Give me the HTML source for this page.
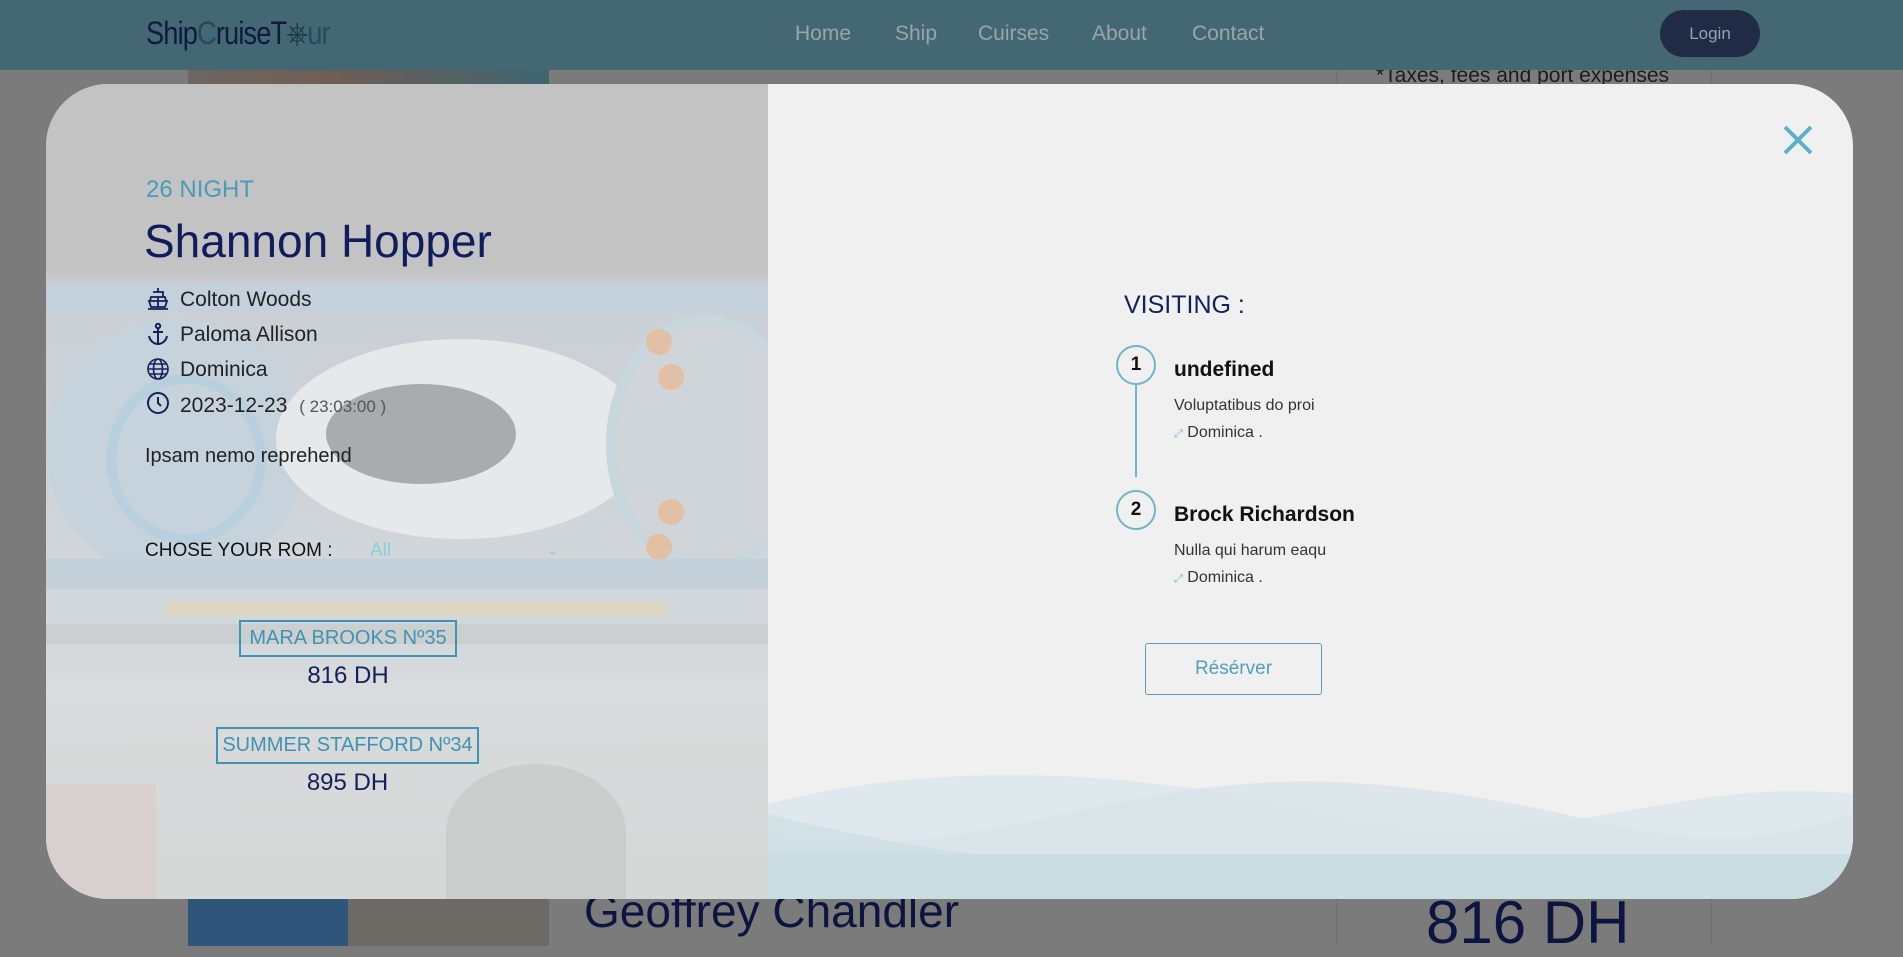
<!DOCTYPE html>
<html><head><meta charset="utf-8"><style>
*{box-sizing:border-box;margin:0;padding:0}
body{width:1903px;height:946px;overflow:hidden;background:#7b7b7b;font-family:"Liberation Sans",sans-serif;position:relative}
.bg{position:absolute;inset:0}
.hdr{position:absolute;left:0;top:0;width:1903px;height:70px;background:#436874}
.nav a{position:absolute;top:22px;font-size:21px;color:#9aa5a8;text-decoration:none}
.login{position:absolute;left:1660px;top:10px;width:100px;height:47px;border-radius:24px;background:#202b46;color:#9aa3b0;font-size:17px;text-align:center;line-height:47px}
.modal{position:absolute;left:46px;top:84px;width:1807px;height:815px;border-radius:62px;overflow:hidden;background:#f0f0f0}
.left{position:absolute;left:0;top:0;width:722px;height:815px;background:linear-gradient(180deg,#c3c3c3 0,#c3c3c3 185px,#c9cfd4 205px,#d3d8dc 560px,#d9dbdc 600px,#d6d7d7 100%);overflow:hidden}
.t{position:absolute;white-space:nowrap}
.ic{position:absolute;left:100px;width:24px;height:24px}
.room{position:absolute;border:2px solid #3f93b3;color:#3f93b3;font-size:20px;text-align:center;line-height:33px}
.price{position:absolute;font-size:24px;color:#14205a;text-align:center}
.circ{position:absolute;width:40px;height:40px;border:2px solid #6db6cc;border-radius:50%;text-align:center;line-height:36px;font-size:19px;color:#111;font-weight:bold}
</style></head><body>
<div class="bg">
 <div style="position:absolute;left:188px;top:70px;width:361px;height:30px;background:linear-gradient(90deg,#6d6660,#6f5e55 40%,#3f6570)"></div>
 <div style="position:absolute;left:188px;top:890px;width:160px;height:56px;background:#30557a"></div>
 <div style="position:absolute;left:348px;top:890px;width:201px;height:56px;background:#6d6a66"></div>
 <div style="position:absolute;left:1336px;top:60px;width:376px;height:886px;border-left:1px solid #6f6f6f;border-right:1px solid #6f6f6f"></div>
 <div class="t" style="left:1376px;top:64px;font-size:21px;color:#1c1c1c">*Taxes, fees and port expenses</div>
 <div class="t" style="left:584px;top:884px;font-size:46px;color:#0b1540">Geoffrey Chandler</div>
 <div class="t" style="left:1426px;top:888px;font-size:60px;color:#0b1540">816 DH</div>
</div>
<div class="hdr">
 <div class="t" style="left:146px;top:15px;font-size:32px;color:#101a40;letter-spacing:-1px;transform:scaleX(.85);transform-origin:left">Ship<span style="color:#2c4658">C</span>ruiseT<span style="color:#1c3048">⎈</span><span style="color:#2a4a60">ur</span></div>
 <div class="nav"><a style="left:795px">Home</a><a style="left:895px">Ship</a><a style="left:978px">Cuirses</a><a style="left:1092px">About</a><a style="left:1192px">Contact</a></div>
 <div class="login">Login</div>
</div>
<div class="modal">
 <div class="left">
  <div style="position:absolute;left:0;top:200px;width:722px;height:28px;background:#c4d1dc"></div>
  <div style="position:absolute;left:0;top:235px;width:260px;height:260px;border-radius:50%;background:#c7d3dc"></div>
  <div style="position:absolute;left:60px;top:290px;width:160px;height:170px;border-radius:50%;border:10px solid #b8d0de"></div>
  <div style="position:absolute;left:230px;top:255px;width:370px;height:200px;border-radius:50%;background:#e6e8ea"></div>
  <div style="position:absolute;left:280px;top:300px;width:190px;height:100px;border-radius:50%;background:#a9acad"></div>
  <div style="position:absolute;left:560px;top:230px;width:200px;height:260px;border-radius:50%;background:#cfd5d8;border:10px solid #c8d6de"></div>
  <div style="position:absolute;left:600px;top:245px;width:26px;height:26px;border-radius:50%;background:#e2c0a5"></div>
  <div style="position:absolute;left:612px;top:280px;width:26px;height:26px;border-radius:50%;background:#e2c0a5"></div>
  <div style="position:absolute;left:612px;top:415px;width:26px;height:26px;border-radius:50%;background:#e2c0a5"></div>
  <div style="position:absolute;left:600px;top:450px;width:26px;height:26px;border-radius:50%;background:#e2c0a5"></div>
  <div style="position:absolute;left:0;top:475px;width:722px;height:30px;background:#c3d0da"></div>
  <div style="position:absolute;left:120px;top:518px;width:500px;height:14px;background:#dcd6c2"></div>
  <div style="position:absolute;left:0;top:540px;width:722px;height:20px;background:#cccfd0"></div>
  <div style="position:absolute;left:0;top:700px;width:110px;height:115px;background:#d8cfcf"></div>
  <div style="position:absolute;left:400px;top:680px;width:180px;height:135px;border-radius:50% 50% 0 0;background:#cbcdcd"></div>
  <div class="t" style="left:100px;top:92px;font-size:24px;color:#4a9bbb;font-weight:500">26 NIGHT</div>
  <div class="t" style="left:98px;top:130px;font-size:46px;color:#101c5c">Shannon Hopper</div>
  <svg class="ic" style="top:203px" viewBox="0 0 24 24" fill="none" stroke="#14205a" stroke-width="1.8"><path d="M12 1v4M7 5h10v5M4 14l1-4h14l1 4M3 14h18l-2 6H5zM12 10v10M2 22h20"/></svg>
  <div class="t" style="left:134px;top:204px;font-size:21px;color:#222">Colton Woods</div>
  <svg class="ic" style="top:238px" viewBox="0 0 24 24" fill="none" stroke="#14205a" stroke-width="2"><circle cx="12" cy="4" r="2.2"/><path d="M12 6v16M7 10h10M3 14c1 5 5 8 9 8s8-3 9-8"/></svg>
  <div class="t" style="left:134px;top:239px;font-size:21px;color:#222">Paloma Allison</div>
  <svg class="ic" style="top:273px" viewBox="0 0 24 24" fill="none" stroke="#14205a" stroke-width="1.6"><circle cx="12" cy="12" r="10"/><ellipse cx="12" cy="12" rx="4.5" ry="10"/><path d="M2 12h20M4 7h16M4 17h16"/></svg>
  <div class="t" style="left:134px;top:274px;font-size:21px;color:#222">Dominica</div>
  <svg class="ic" style="top:307px" viewBox="0 0 24 24" fill="none" stroke="#14205a" stroke-width="2"><circle cx="12" cy="12" r="10"/><path d="M12 6v6l3 3"/></svg>
  <div class="t" style="left:134px;top:310px;font-size:21px;color:#222">2023-12-23 <span style="font-size:17px;color:#555;margin-left:6px">( 23:03:00 )</span></div>
  <div class="t" style="left:99px;top:361px;font-size:20px;color:#222">Ipsam nemo reprehend</div>
  <div class="t" style="left:99px;top:456px;font-size:19px;color:#111">CHOSE YOUR ROM :</div>
  <div class="t" style="left:324px;top:456px;font-size:19px;color:#8ccde0">All</div>
  <div class="t" style="left:500px;top:456px;font-size:16px;color:#8ccde0">⌄</div>
  <div class="room" style="left:193px;top:536px;width:218px;height:37px">MARA BROOKS Nº35</div>
  <div class="price" style="left:193px;top:578px;width:218px">816 DH</div>
  <div class="room" style="left:170px;top:643px;width:263px;height:37px">SUMMER STAFFORD Nº34</div>
  <div class="price" style="left:170px;top:685px;width:263px">895 DH</div>
 </div>
 <svg style="position:absolute;left:722px;top:680px" width="1085" height="135" viewBox="0 0 1085 135" preserveAspectRatio="none">
  <path d="M0 40 C150 0 350 0 560 50 S900 10 1085 30 V135 H0Z" fill="#dfe8ec"/>
  <path d="M0 70 C200 110 350 0 600 20 S900 110 1085 50 V135 H0Z" fill="#d8e4e9" opacity=".8"/>
  <path d="M0 50 C150 90 400 120 600 120 S900 80 1085 120 V135 H0Z" fill="#cddfe5" opacity=".8"/>
  <rect y="90" width="1085" height="45" fill="#c9dde3"/>
 </svg>
 <svg style="position:absolute;left:1736px;top:40px" width="32" height="32" viewBox="0 0 32 32"><path d="M3 3L29 29M29 3L3 29" stroke="#5ab0c8" stroke-width="4"/></svg>
 <div class="t" style="left:1078px;top:207px;font-size:25px;color:#14205a">VISITING :</div>
 <div style="position:absolute;left:1089px;top:301px;width:2px;height:92px;background:#6db6cc"></div>
 <div class="circ" style="left:1070px;top:261px">1</div>
 <div class="t" style="left:1128px;top:274px;font-size:21px;color:#111;font-weight:bold">undefined</div>
 <div class="t" style="left:1128px;top:313px;font-size:16px;color:#333">Voluptatibus do proi</div>
 <div class="t" style="left:1128px;top:340px;font-size:16px;color:#333"><span style="color:#6db6cc;font-size:11px">⤢</span> Dominica .</div>
 <div class="circ" style="left:1070px;top:406px">2</div>
 <div class="t" style="left:1128px;top:419px;font-size:21px;color:#111;font-weight:bold">Brock Richardson</div>
 <div class="t" style="left:1128px;top:458px;font-size:16px;color:#333">Nulla qui harum eaqu</div>
 <div class="t" style="left:1128px;top:485px;font-size:16px;color:#333"><span style="color:#6db6cc;font-size:11px">⤢</span> Dominica .</div>
 <div style="position:absolute;left:1099px;top:559px;width:177px;height:52px;border:1.5px solid #5a9fb9;border-radius:3px;color:#4f9fbd;font-size:19px;text-align:center;line-height:49px">Résérver</div>
</div>
</body></html>
